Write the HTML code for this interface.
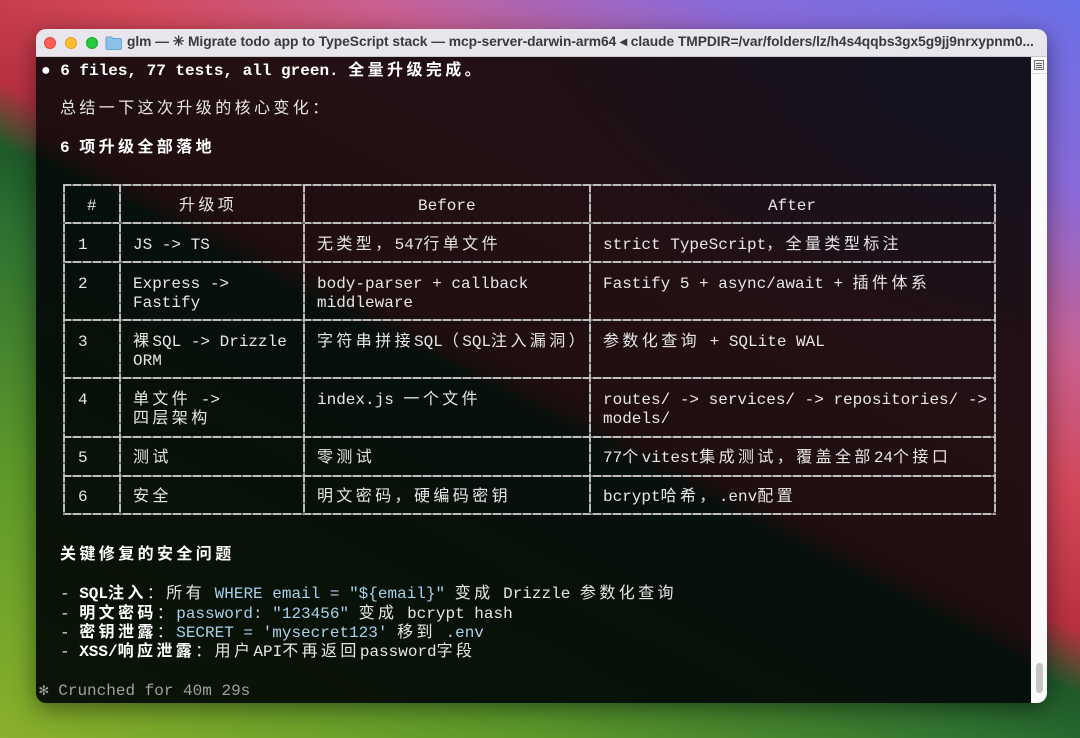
<!DOCTYPE html>
<html><head><meta charset="utf-8"><style>
*{margin:0;padding:0;box-sizing:border-box}
html,body{width:1080px;height:738px;overflow:hidden}
body{position:relative;background:linear-gradient(27deg,#8ab02a 0%,#5a972a 22%,#2d7030 40%,#1e5a2a 46%,#b83040 51%,#d2485a 62%,#c86090 72%,#8a6ad8 85%,#6a70e8 100%);font-family:"Liberation Mono","Noto Sans CJK SC",monospace}
.win{position:absolute;left:36px;top:29px;width:1011px;height:674px;border-radius:10px;overflow:hidden;box-shadow:0 6px 24px rgba(0,0,0,.45)}
.tb{position:absolute;left:0;top:0;width:1011px;height:28px;background:#e8e5ec;border-bottom:1px solid #c9c6cc}
.dot{position:absolute;top:8px;width:12px;height:12px;border-radius:50%}
.title{position:absolute;left:91px;top:5px;font:600 13.8px "Liberation Sans","Noto Sans CJK SC",sans-serif;color:#3a3a3e;white-space:nowrap;letter-spacing:-0.05px}
.term{position:absolute;left:0;top:28px;width:995px;height:646px;background:
radial-gradient(ellipse 500px 300px at 100% 0%,rgba(18,18,34,.9),rgba(18,18,34,0)),
linear-gradient(27deg,#0b1406 0%,#07100a 40%,#06100b 47%,#1f0e10 49.5%,#231014 70%,#1a1018 100%)}
.sb{position:absolute;left:995px;top:28px;width:16px;height:646px;background:#fafafa}
.l{position:absolute;white-space:pre;font-family:"Liberation Mono","Noto Sans CJK SC",monospace;font-size:16px;line-height:19.5px;margin-top:2.5px;color:#e6e6e6}
.c{letter-spacing:3.4px;line-height:0}
.b{font-weight:bold;color:#fff}
.k{color:#a8d0ec}
.h{position:absolute;height:2px;left:27px;width:933px;background:repeating-linear-gradient(90deg,#bdbdbd 0 8px,#6a6a6a 8px 10px)}
.v{position:absolute;width:2px;background:repeating-linear-gradient(180deg,#bdbdbd 0 8px,#6a6a6a 8px 10px)}
</style></head><body>
<div class="win">
<div class="tb">
<div class="dot" style="left:8px;background:#fe5f57;border:1px solid #e0443e"></div>
<div class="dot" style="left:29px;background:#febc2e;border:1px solid #dea123"></div>
<div class="dot" style="left:50px;background:#28c840;border:1px solid #1aab29"></div>
<svg style="position:absolute;left:69px;top:7px" width="17" height="14" viewBox="0 0 17 14"><path d="M1 2.5q0-1.5 1.5-1.5h4l1.5 1.5h7q1.5 0 1.5 1.5v8q0 1.5-1.5 1.5h-12.5q-1.5 0-1.5-1.5z" fill="#8cc0e8" stroke="#6aa6d6"/></svg>
<div class="title">glm — ✳ Migrate todo app to TypeScript stack — mcp-server-darwin-arm64 ◂ claude TMPDIR=/var/folders/lz/h4s4qqbs3gx5g9jj9nrxypnm0...</div>
</div>
<div class="term">
<div class="l b" style="left:5px;top:2px">● 6 files, 77 tests, all green. <span class="c">全量升级完成。</span></div>
<div class="l" style="left:24px;top:40px"><span class="c">总结一下这次升级的核心变化：</span></div>
<div class="l b" style="left:24px;top:79px">6 <span class="c">项升级全部落地</span></div>

<div class="h" style="top:127px"></div>
<div class="h" style="top:165px"></div>
<div class="h" style="top:204px"></div>
<div class="h" style="top:262px"></div>
<div class="h" style="top:320px"></div>
<div class="h" style="top:379px"></div>
<div class="h" style="top:418px"></div>
<div class="h" style="top:456px"></div>
<div class="v" style="left:27px;top:127px;height:331px"></div>
<div class="v" style="left:83px;top:127px;height:331px"></div>
<div class="v" style="left:267px;top:127px;height:331px"></div>
<div class="v" style="left:553px;top:127px;height:331px"></div>
<div class="v" style="left:958px;top:127px;height:331px"></div>

<div class="l" style="left:51px;top:137px">#</div>
<div class="l" style="left:143px;top:137px"><span class="c">升级项</span></div>
<div class="l" style="left:382px;top:137px">Before</div>
<div class="l" style="left:732px;top:137px">After</div>

<div class="l" style="left:42px;top:176px">1</div>
<div class="l" style="left:97px;top:176px">JS -&gt; TS</div>
<div class="l" style="left:281px;top:176px"><span class="c">无类型，</span>547<span class="c">行单文件</span></div>
<div class="l" style="left:567px;top:176px">strict TypeScript<span class="c">，全量类型标注</span></div>

<div class="l" style="left:42px;top:215px">2</div>
<div class="l" style="left:97px;top:215px">Express -&gt;
Fastify</div>
<div class="l" style="left:281px;top:215px">body-parser + callback
middleware</div>
<div class="l" style="left:567px;top:215px">Fastify 5 + async/await + <span class="c">插件体系</span></div>

<div class="l" style="left:42px;top:273px">3</div>
<div class="l" style="left:97px;top:273px"><span class="c">裸</span>SQL -&gt; Drizzle
ORM</div>
<div class="l" style="left:281px;top:273px"><span class="c">字符串拼接</span>SQL<span class="c">（</span>SQL<span class="c">注入漏洞）</span></div>
<div class="l" style="left:567px;top:273px"><span class="c">参数化查询</span> + SQLite WAL</div>

<div class="l" style="left:42px;top:331px">4</div>
<div class="l" style="left:97px;top:331px"><span class="c">单文件</span> -&gt;
<span class="c">四层架构</span></div>
<div class="l" style="left:281px;top:331px">index.js <span class="c">一个文件</span></div>
<div class="l" style="left:567px;top:331px">routes/ -&gt; services/ -&gt; repositories/ -&gt;
models/</div>

<div class="l" style="left:42px;top:389px">5</div>
<div class="l" style="left:97px;top:389px"><span class="c">测试</span></div>
<div class="l" style="left:281px;top:389px"><span class="c">零测试</span></div>
<div class="l" style="left:567px;top:389px">77<span class="c">个</span>vitest<span class="c">集成测试，覆盖全部</span>24<span class="c">个接口</span></div>

<div class="l" style="left:42px;top:428px">6</div>
<div class="l" style="left:97px;top:428px"><span class="c">安全</span></div>
<div class="l" style="left:281px;top:428px"><span class="c">明文密码，硬编码密钥</span></div>
<div class="l" style="left:567px;top:428px">bcrypt<span class="c">哈希，</span>.env<span class="c">配置</span></div>

<div class="l b" style="left:24px;top:486px"><span class="c">关键修复的安全问题</span></div>
<div class="l" style="left:24px;top:525px">- <b class="b">SQL<span class="c">注入</span></b><span class="c">：所有</span> <span class="k">WHERE email = "${email}"</span> <span class="c">变成</span> Drizzle <span class="c">参数化查询</span></div>
<div class="l" style="left:24px;top:545px">- <b class="b c">明文密码</b><span class="c">：</span><span class="k">password: "123456"</span> <span class="c">变成</span> bcrypt hash</div>
<div class="l" style="left:24px;top:564px">- <b class="b c">密钥泄露</b><span class="c">：</span><span class="k">SECRET = 'mysecret123'</span> <span class="c">移到</span> <span class="k">.env</span></div>
<div class="l" style="left:24px;top:583px">- <b class="b">XSS/<span class="c">响应泄露</span></b><span class="c">：用户</span>API<span class="c">不再返回</span>password<span class="c">字段</span></div>
<div class="l" style="left:3px;top:622px;color:#a0a0a0">✻ Crunched for 40m 29s</div>
</div>
<div class="sb">
<svg style="position:absolute;left:3px;top:3px" width="10" height="10" viewBox="0 0 10 10"><rect x="0.5" y="0.5" width="9" height="9" fill="#eee" stroke="#777"/><path d="M2 3.5h6M2 5.5h6M2 7.5h6" stroke="#666"/></svg>
<div style="position:absolute;left:0;top:16px;width:16px;height:1px;background:#ddd"></div>
<div style="position:absolute;left:5px;top:606px;width:7px;height:30px;border-radius:4px;background:#c6c6c6"></div>
</div>
</div>
</body></html>
